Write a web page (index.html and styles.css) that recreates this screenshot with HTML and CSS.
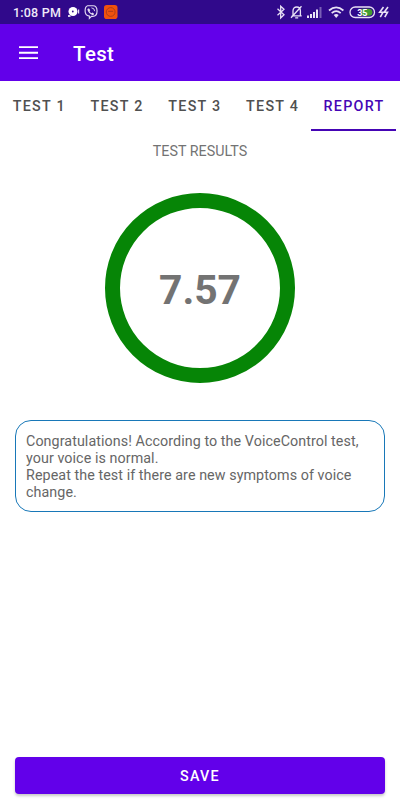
FILE: index.html
```html
<!DOCTYPE html>
<html lang="en">
<head>
<meta charset="utf-8">
<title>Test</title>
<link rel="stylesheet" href="styles.css">
</head>
<body>
<div class="status">
  <span class="time">1:08 PM</span>
  <svg class="notifications" width="54" height="16" viewBox="0 0 54 16">
    <circle cx="6" cy="7.500" r="4.500" fill="#fff"/><path d="M1 12h2.500" stroke="#fff" stroke-width="1.600"/><circle cx="5.800" cy="7.500" r=".9" fill="#30098b"/><path d="M11.600 5.500v4" stroke="#e4dcf3" stroke-width="1.200"/>
    <g transform="translate(-2.800 -.500) scale(1.040)">
    <path d="M22.500 2.200h5.200c2.700 0 3.900 1.500 3.900 5.100s-1.200 5.100-4.200 5.100h-1.200l-2 2v-2.300c-3.200-.4-4.100-1.700-4.100-4.900 0-3.300.6-4.500 2.400-5z" fill="none" stroke="#e4dcf3" stroke-width="1.100"/>
    <path d="M23 4.800l1 .1 1 1.600-.6.900c.4 1 1 1.600 1.800 1.900l.9-.6 1.600 1.100c0 1-1 1.500-1.700 1.200-2.200-.9-3.900-2.700-4.700-5 0-.5.200-.9.700-1.200z" fill="#e4dcf3"/><path d="M26.200 4.200q3 .2 3.100 3.200" fill="none" stroke="#e4dcf3" stroke-width=".9"/>
    </g>
    <rect x="37" y="1" width="13.500" height="14" rx="2.800" fill="#f1520d"/>
    <circle cx="43.700" cy="8" r="4.400" fill="none" stroke="#a83a1b" stroke-width=".9"/><path d="M41.200 7.300h5" stroke="#a83a1b"/>
  </svg>
  <svg class="system" width="116" height="16" viewBox="0 0 116 16" fill="none" stroke="#e8e1f5" stroke-width="1.300">
    <path d="M1.500 4.800l6.500 6-3.300 3.200V2.200L8 5.300l-6.500 6"/>
    <path d="M15.700 11.800h10M17 11.500V7c0-2.700 1.600-4 3.700-4s3.700 1.300 3.700 4v4.500M19.200 13.800h3M25.500 2.300L15 13.800"/>
    <g fill="#e8e1f5" stroke="none"><path d="M31 11.500h2v2.500h-2zM34 10h2v4h-2zM37 8h2v6h-2zM40 5.500h2V14h-2z"/><path opacity=".4" d="M43.500 3h2v11h-2z"/></g>
    <path d="M53 6.500q7.200-6.200 14.400 0M55.700 9.100q4.500-3.900 9 0" stroke-width="1.800"/><path d="M57.700 10.900q2.500-2 5 0l-2.500 3z" fill="#e8e1f5" stroke="none"/>
    <rect x="74" y="3" width="24.500" height="10.500" rx="5.250"/>
    <path d="M85.500 4.700h7.400a3.550 3.550 0 0 1 0 7.100h-7.400z" fill="#439c2f" stroke="none"/>
    <text class="battery" x="86.300" y="11.500" text-anchor="middle">35</text>
    <path d="M107.500 3l-3.800 5.200h3.300l-2.700 5M112 3l-3.800 5.200h3.300l-2.700 5" stroke-width="1.600"/>
  </svg>
</div>
<header class="appbar">
  <svg class="menu" width="20" height="14" viewBox="0 0 20 14"><path d="M0 1.100h19M0 6.700h19M0 12.100h19" stroke="#fff" stroke-width="1.900"/></svg>
  <h1>Test</h1>
</header>
<nav class="tabs">
  <div class="tab">TEST 1</div><div class="tab">TEST 2</div><div class="tab">TEST 3</div><div class="tab">TEST 4</div><div class="tab active">REPORT</div>
</nav>
<main class="report">
  <h2>TEST RESULTS</h2>
  <div class="score">7.57</div>
  <p class="message">Congratulations! According to the VoiceControl test,<br>your voice is normal.<br>Repeat the test if there are new symptoms of voice<br>change.</p>
  <button class="save">SAVE</button>
</main>
</body>
</html>
```
FILE: styles.css
```css
* { box-sizing: border-box; }
body {
  margin: 0;
  height: 800px;
  display: flex;
  flex-direction: column;
  overflow: hidden;
  background: #fff;
  font-family: Roboto, sans-serif;
  color: #737373;
}
.status {
  height: 24px;
  flex: none;
  display: flex;
  align-items: center;
  padding: 0 8px 0 13px;
  background: #30098b;
  color: #eee8f8;
}
.time { width: 54px; font-size: 12.5px; font-weight: 500; line-height: 16px; letter-spacing: .2px; white-space: nowrap; padding-top: 1px; }
.system { margin-left: auto; }
.battery { font-size: 9px; font-weight: 700; fill: #fff; stroke: none; }
.appbar {
  height: 57px;
  flex: none;
  display: flex;
  align-items: center;
  padding-left: 19px;
  background: #6200ea;
  color: #fff;
}
.menu { margin-right: 34px; }
h1 { margin: 0; font-size: 20.4px; font-weight: 500; line-height: 24px; letter-spacing: .4px; padding-top: 3px; }
.tabs {
  height: 49.5px;
  flex: none;
  display: grid;
  grid-template-columns: 77.7px 77.8px 77.8px 77.7px 85px;
}
.tab {
  display: flex;
  align-items: center;
  justify-content: center;
  padding: 3px 0 0 1px;
  border-bottom: 2px solid transparent;
  color: #505050;
  font-size: 14.3px;
  font-weight: 500;
  letter-spacing: 1.27px;
  white-space: nowrap;
}
.active { color: #4505b5; border-color: #4505b5; }
.report { flex: 1; display: flex; flex-direction: column; padding: 12px 15px 6px; }
h2 { margin: 0; text-align: center; font-size: 14.3px; font-weight: 400; line-height: 17px; }
.score {
  width: 190px;
  height: 190px;
  margin: 33px auto 0;
  border: 15px solid #068506;
  border-radius: 50%;
  display: flex;
  align-items: center;
  justify-content: center;
  padding-top: 4px;
  font-size: 40.8px;
  font-weight: 700;
}
.message {
  margin: 37px 0 0;
  height: 92px;
  border: 1px solid #1878b8;
  border-radius: 16px;
  padding: 12px 10px;
  color: #666;
  font-size: 14.3px;
  line-height: 17.1px;
  letter-spacing: .07px;
  white-space: nowrap;
}
.save {
  margin-top: auto;
  height: 37px;
  flex: none;
  border: 0;
  border-radius: 4px;
  background: #6200ea;
  color: #fff;
  font: 500 14.3px Roboto, sans-serif;
  letter-spacing: 1.27px;
  box-shadow: 0 2px 3px rgba(0, 0, 0, .22);
}
```
